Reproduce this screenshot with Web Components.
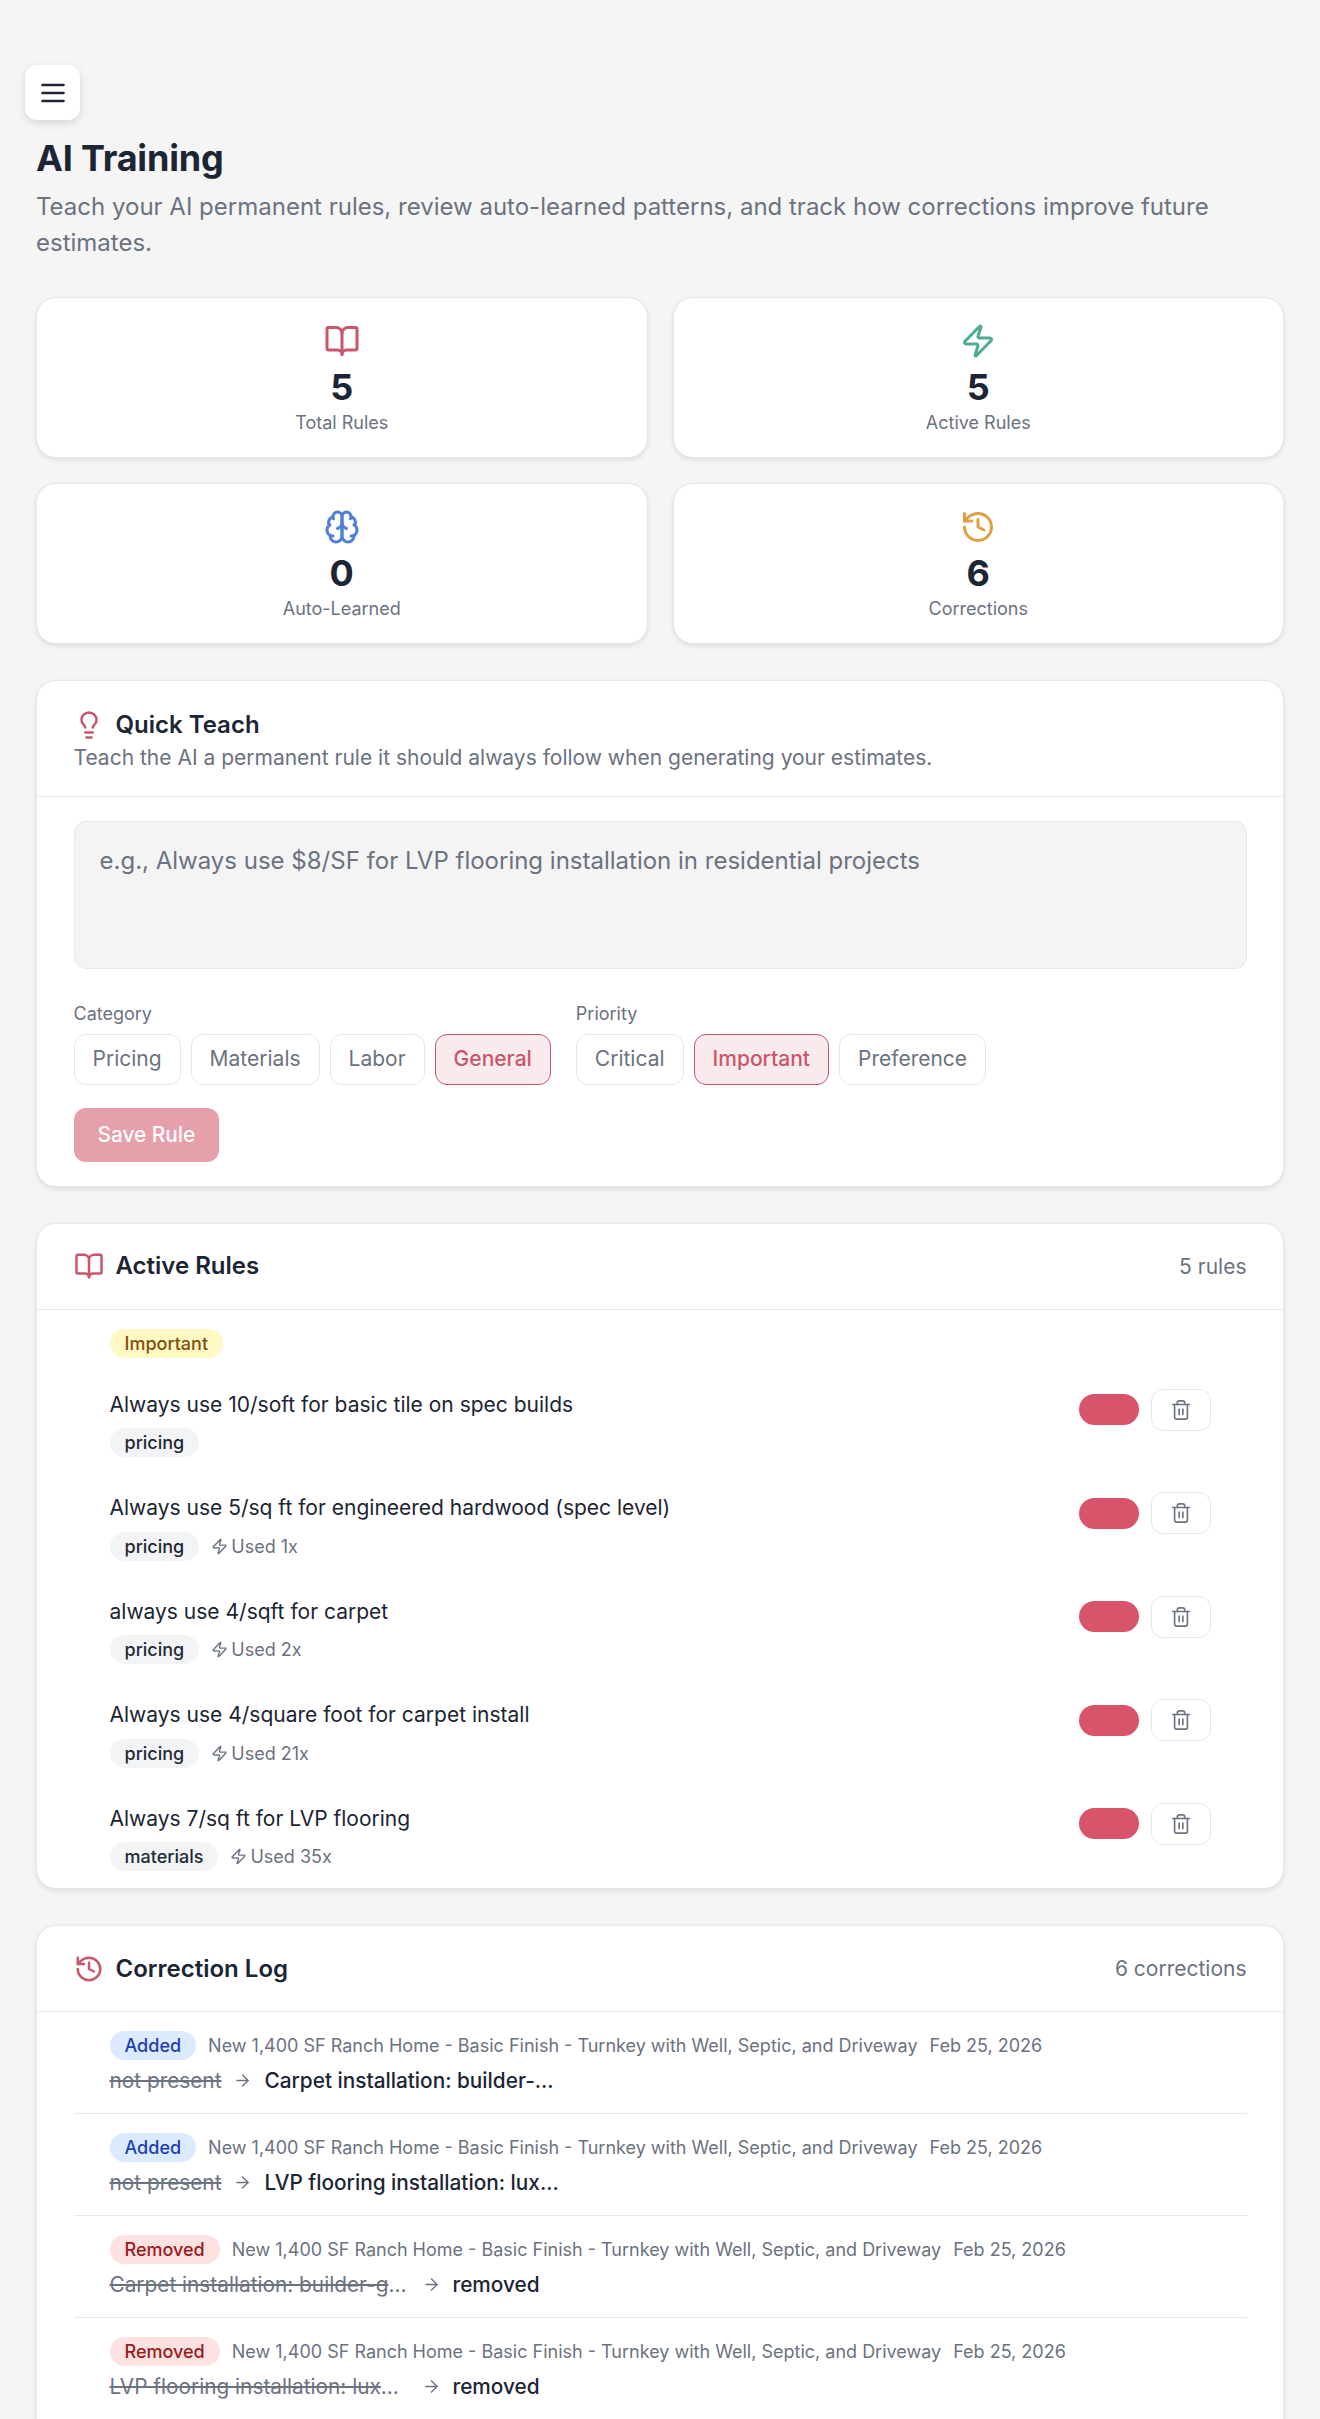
<!DOCTYPE html>
<html lang="en">
<head>
<meta charset="utf-8">
<title>AI Training</title>
<style>
  html, body { margin: 0; padding: 0; background: #f5f5f5; height: 2419px; overflow: hidden; }
  body { font-family: Inter, "Liberation Sans", sans-serif; color: #1c2533; }
</style>
</head>
<body>
<training-page>
  <menu-button></menu-button>
  <page-title heading="AI Training">Teach your AI permanent rules, review auto-learned patterns, and track how corrections improve future estimates.</page-title>

  <stat-grid>
    <stat-card icon="book" color="#c9566a" value="5" label="Total Rules"></stat-card>
    <stat-card icon="zap" color="#4fae8a" value="5" label="Active Rules"></stat-card>
    <stat-card icon="brain" color="#4f7fd9" value="0" label="Auto-Learned"></stat-card>
    <stat-card icon="history" color="#e0a040" value="6" label="Corrections"></stat-card>
  </stat-grid>

  <panel-card icon="bulb" heading="Quick Teach" sub="Teach the AI a permanent rule it should always follow when generating your estimates.">
    <teach-form></teach-form>
  </panel-card>

  <panel-card icon="book" heading="Active Rules" count="5 rules">
    <rules-list>
      <rule-group label="Important">
        <rule-row text="Always use 10/soft for basic tile on spec builds" tag="pricing"></rule-row>
        <rule-row text="Always use 5/sq ft for engineered hardwood (spec level)" tag="pricing" used="Used 1x"></rule-row>
        <rule-row text="always use 4/sqft for carpet" tag="pricing" used="Used 2x"></rule-row>
        <rule-row text="Always use 4/square foot for carpet install" tag="pricing" used="Used 21x"></rule-row>
        <rule-row text="Always 7/sq ft for LVP flooring" tag="materials" used="Used 35x"></rule-row>
      </rule-group>
    </rules-list>
  </panel-card>

  <panel-card icon="history" heading="Correction Log" count="6 corrections">
    <log-list>
      <log-entry kind="Added" old="not present" new="Carpet installation: builder-..."></log-entry>
      <log-entry kind="Added" old="not present" new="LVP flooring installation: lux..."></log-entry>
      <log-entry kind="Removed" old="Carpet installation: builder-g" cut new="removed"></log-entry>
      <log-entry kind="Removed" old="LVP flooring installation: lux" cut new="removed" last></log-entry>
    </log-list>
  </panel-card>
</training-page>

<script>
// lucide style icon paths
const ICONS = {
  menu: '<path d="M4 6h16"/><path d="M4 12h16"/><path d="M4 18h16"/>',
  book: '<path d="M12 7v14"/><path d="M3 18a1 1 0 0 1-1-1V4a1 1 0 0 1 1-1h5a4 4 0 0 1 4 4 4 4 0 0 1 4-4h5a1 1 0 0 1 1 1v13a1 1 0 0 1-1 1h-6a3 3 0 0 0-3 3 3 3 0 0 0-3-3z"/>',
  zap: '<path d="M4 14a1 1 0 0 1-.78-1.63l9.9-10.2a.5.5 0 0 1 .86.46l-1.92 6.02A1 1 0 0 0 13 10h7a1 1 0 0 1 .78 1.63l-9.9 10.2a.5.5 0 0 1-.86-.46l1.92-6.02A1 1 0 0 0 11 14z"/>',
  brain: '<path d="M12 5a3 3 0 1 0-5.997.125 4 4 0 0 0-2.526 5.77 4 4 0 0 0 .556 6.588A4 4 0 1 0 12 18Z"/><path d="M12 5a3 3 0 1 1 5.997.125 4 4 0 0 1 2.526 5.77 4 4 0 0 1-.556 6.588A4 4 0 1 1 12 18Z"/><path d="M15 13a4.5 4.5 0 0 1-3-4 4.5 4.5 0 0 1-3 4"/><path d="M17.599 6.5a3 3 0 0 0 .399-1.375"/><path d="M6.003 5.125A3 3 0 0 0 6.401 6.5"/><path d="M3.477 10.896a4 4 0 0 1 .585-.396"/><path d="M19.938 10.5a4 4 0 0 1 .585.396"/><path d="M6 18a4 4 0 0 1-1.967-.516"/><path d="M19.967 17.484A4 4 0 0 1 18 18"/>',
  history: '<path d="M3 12a9 9 0 1 0 9-9 9.75 9.75 0 0 0-6.74 2.74L3 8"/><path d="M3 3v5h5"/><path d="M12 7v5l4 2"/>',
  bulb: '<path d="M15 14c.2-1 .7-1.7 1.5-2.5 1-.9 1.5-2.2 1.5-3.5A6 6 0 0 0 6 8c0 1 .2 2.2 1.5 3.5.7.7 1.3 1.5 1.5 2.5"/><path d="M9 18h6"/><path d="M10 22h4"/>',
  trash: '<path d="M3 6h18"/><path d="M19 6v14c0 1-1 2-2 2H7c-1 0-2-1-2-2V6"/><path d="M8 6V4c0-1 1-2 2-2h4c1 0 2 1 2 2v2"/><path d="M10 11v6"/><path d="M14 11v6"/>',
  arrow: '<path d="M5 12h14"/><path d="m12 5 7 7-7 7"/>'
};

function svgIcon(name, size, color, weight) {
  return `<svg xmlns="http://www.w3.org/2000/svg" width="${size}" height="${size}" viewBox="0 0 24 24" fill="none" stroke="${color}" stroke-width="${weight || 2}" stroke-linecap="round" stroke-linejoin="round" style="display:block;flex:none">${ICONS[name]}</svg>`;
}

class ShadowBase extends HTMLElement {
  constructor() {
    super();
    this.attachShadow({ mode: "open" });
  }
  connectedCallback() {
    this.shadowRoot.innerHTML = this.render();
  }
  attr(name) {
    return this.getAttribute(name) || "";
  }
}

class TrainingPage extends ShadowBase {
  render() {
    return `<style>
      :host { display: block; padding: 65px 36px 0; }
      ::slotted(stat-grid) { margin-bottom: 36px; }
      ::slotted(panel-card) { margin-bottom: 36px; }
    </style><slot></slot>`;
  }
}

class MenuButton extends ShadowBase {
  render() {
    return `<style>
      :host { display: flex; width: 55px; height: 55px; margin-left: -11px; align-items: center; justify-content: center;
        background: #fff; border-radius: 12px; box-shadow: 0 3px 9px rgba(0,0,0,.13); }
    </style>${svgIcon("menu", 32, "#1c2533", 1.75)}`;
  }
}

class PageTitle extends ShadowBase {
  render() {
    return `<style>
      :host { display: block; margin: 16px 0 36px; }
      h1 { margin: 0 0 9px; font-size: 36px; line-height: 44px; font-weight: 700; color: #1c2533; letter-spacing: -.2px; }
      p { margin: 0; font-size: 24px; line-height: 36px; color: #6b7280; }
    </style><h1>${this.attr("heading")}</h1><p><slot></slot></p>`;
  }
}

class StatGrid extends ShadowBase {
  render() {
    return `<style>
      :host { display: grid; grid-template-columns: 1fr 1fr; gap: 25.5px 25px; }
    </style><slot></slot>`;
  }
}

class StatCard extends ShadowBase {
  render() {
    return `<style>
      :host { display: flex; flex-direction: column; align-items: center; height: 160.5px; box-sizing: border-box; padding-top: 25px;
        background: #fff; border: 1.5px solid #e5e7eb; border-radius: 20px; box-shadow: 0 2px 5px rgba(0,0,0,.1); }
      .v { margin-top: 6px; font-size: 36px; line-height: 44px; font-weight: 700; color: #1c2533; }
      .l { margin-top: 0; font-size: 18px; line-height: 27px; color: #6b7280; }
    </style>${svgIcon(this.attr("icon"), 36, this.attr("color"))}
    <div class="v">${this.attr("value")}</div><div class="l">${this.attr("label")}</div>`;
  }
}

class PanelCard extends ShadowBase {
  render() {
    const sub = this.attr("sub");
    const count = this.attr("count");
    return `<style>
      :host { display: block; background: #fff; border: 1.5px solid #e5e7eb; border-radius: 20px; box-shadow: 0 2px 5px rgba(0,0,0,.1); }
      header { display: flex; align-items: center; justify-content: space-between; padding: ${sub ? "26px 36.5px 23px" : "24.5px 36.5px"}; border-bottom: 1.5px solid #e5e7eb; }
      .t { display: flex; align-items: center; gap: 12px; }
      h2 { margin: 0; font-size: 24px; line-height: 36px; font-weight: 600; color: #1c2533; }
      p { margin: 0; font-size: 21px; line-height: 30px; color: #6b7280; }
      .c { font-size: 21px; color: #6b7280; }
    </style><header><div>
      <div class="t">${svgIcon(this.attr("icon"), 30, "#c9566a")}<h2>${this.attr("heading")}</h2></div>
      ${sub ? `<p>${sub}</p>` : ""}
    </div>${count ? `<div class="c">${count}</div>` : ""}</header><slot></slot>`;
  }
}

class TeachForm extends ShadowBase {
  render() {
    const chip = (t, on) => `<span class="chip${on ? " on" : ""}">${t}</span>`;
    return `<style>
      :host { display: block; padding: 24px 36.5px 24px; }
      .area { box-sizing: border-box; height: 148px; padding: 23px 25px; background: #f4f4f5; border: 1.5px solid #e5e7eb; border-radius: 12px;
        font-size: 24px; line-height: 32px; color: #6b7280; }
      .row { display: flex; gap: 25px; margin-top: 31px; }
      .lab { font-size: 18px; line-height: 27px; color: #6b7280; margin-bottom: 7px; }
      .chips { display: flex; gap: 10px; }
      .chip { display: block; box-sizing: border-box; height: 51px; padding: 0 18px; line-height: 48px; font-size: 21px; color: #6b7280;
        background: #fff; border: 1.5px solid #e5e7eb; border-radius: 12px; }
      .chip.on { color: #c9566a; background: #f9ebed; border-color: #c0566a; font-weight: 500; }
      .save { display: inline-block; margin-top: 23px; height: 54px; padding: 0 24px; line-height: 54px; font-size: 20.8px; font-weight: 500; color: #fff;
        background: #e6a0ac; border-radius: 12px; }
    </style>
    <div class="area">e.g., Always use $8/SF for LVP flooring installation in residential projects</div>
    <div class="row">
      <div><div class="lab">Category</div><div class="chips">${chip("Pricing")}${chip("Materials")}${chip("Labor")}${chip("General", true)}</div></div>
      <div><div class="lab">Priority</div><div class="chips">${chip("Critical")}${chip("Important", true)}${chip("Preference")}</div></div>
    </div>
    <div class="save">Save Rule</div>`;
  }
}

class RulesList extends ShadowBase {
  render() {
    return `<style>:host { display: block; padding: 19px 72.5px 17px; }</style><slot></slot>`;
  }
}

class RuleGroup extends ShadowBase {
  render() {
    return `<style>
      :host { display: block; }
      .b { display: inline-block; height: 29px; padding: 0 15px; line-height: 29px; font-size: 18px; font-weight: 500; color: #854d0e; background: #fef9c3; border-radius: 15px; }
      .rows { display: flex; flex-direction: column; gap: 35px; margin-top: 31px; }
    </style><span class="b">${this.attr("label")}</span><div class="rows"><slot></slot></div>`;
  }
}

class RuleRow extends ShadowBase {
  render() {
    const used = this.attr("used");
    return `<style>
      :host { display: flex; align-items: flex-start; justify-content: space-between; }
      .txt { font-size: 21px; line-height: 31px; color: #1c2533; }
      .meta { display: flex; align-items: center; gap: 12px; margin-top: 8.5px; }
      .tag { height: 29px; padding: 0 15px; line-height: 29px; font-size: 18px; font-weight: 500; color: #1f2937; background: #f3f4f6; border-radius: 15px; }
      .used { display: flex; align-items: center; gap: 3px; font-size: 18px; color: #6b7280; }
      .act { display: flex; align-items: center; gap: 12px; }
      .toggle { width: 60px; height: 31px; background: #d9546a; border-radius: 16px; }
      .del { display: flex; align-items: center; justify-content: center; box-sizing: border-box; width: 60px; height: 42px; background: #fff; border: 1.5px solid #e5e7eb; border-radius: 12px; }
    </style>
    <div><div class="txt">${this.attr("text")}</div>
      <div class="meta"><span class="tag">${this.attr("tag")}</span>${used ? `<span class="used">${svgIcon("zap", 17, "#6b7280")}${used}</span>` : ""}</div></div>
    <div class="act"><div class="toggle"></div><div class="del">${svgIcon("trash", 22, "#6b7280", 1.8)}</div></div>`;
  }
}

class LogList extends ShadowBase {
  render() {
    return `<style>:host { display: block; padding: 0 36.5px 60px; }</style><slot></slot>`;
  }
}

class LogEntry extends ShadowBase {
  render() {
    const kind = this.attr("kind");
    const added = kind === "Added";
    const cut = this.hasAttribute("cut");
    return `<style>
      :host { display: block; padding: 19px 36px 17px; ${this.hasAttribute("last") ? "" : "border-bottom: 1.5px solid #e5e7eb;"} }
      .top { display: flex; align-items: center; gap: 12px; font-size: 18px; color: #6b7280; }
      .b { height: 29px; padding: 0 15px; line-height: 29px; font-weight: 500; border-radius: 15px;
        color: ${added ? "#1e40af" : "#991b1b"}; background: ${added ? "#dbeafe" : "#fee2e2"}; }
      .bot { display: flex; align-items: center; gap: 12px; margin-top: 5px; height: 31px; font-size: 20.8px; }
      .old { color: #6b7280; white-space: nowrap; ${cut ? "width: 300px;" : ""} }
      .n { color: #1c2533; font-weight: 500; }
    </style>
    <div class="top"><span class="b">${kind}</span><span>New 1,400 SF Ranch Home - Basic Finish - Turnkey with Well, Septic, and Driveway</span><span>Feb 25, 2026</span></div>
    <div class="bot"><span class="old"><s>${this.attr("old")}</s>${cut ? "..." : ""}</span>${svgIcon("arrow", 19, "#6b7280", 1.8)}<span class="n">${this.attr("new")}</span></div>`;
  }
}

customElements.define("training-page", TrainingPage);
customElements.define("menu-button", MenuButton);
customElements.define("page-title", PageTitle);
customElements.define("stat-grid", StatGrid);
customElements.define("stat-card", StatCard);
customElements.define("panel-card", PanelCard);
customElements.define("teach-form", TeachForm);
customElements.define("rules-list", RulesList);
customElements.define("rule-group", RuleGroup);
customElements.define("rule-row", RuleRow);
customElements.define("log-list", LogList);
customElements.define("log-entry", LogEntry);
</script>
</body>
</html>
